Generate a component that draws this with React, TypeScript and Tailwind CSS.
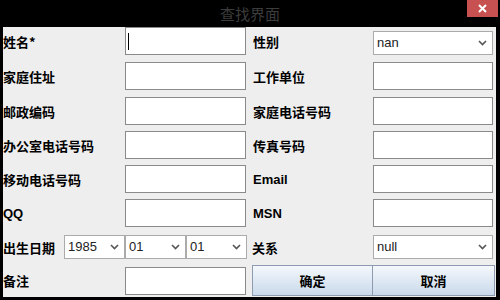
import React from "react";

const cjk = { fontFamily: '"Noto Sans CJK SC", "Noto Sans", sans-serif' };
const latin = { fontFamily: '"Liberation Sans", Arial, sans-serif' };

function Chevron() {
  return (
    <svg width="9" height="6" viewBox="0 0 9 6" className="shrink-0">
      <polyline points="1,1 4.5,4.5 8,1" fill="none" stroke="#555" strokeWidth="1.6" />
    </svg>
  );
}

function Field({ caret = false, w = "w-[121px]" }: { caret?: boolean; w?: string }) {
  return (
    <div className={`${w} h-[28px] shrink-0 border border-[#8a8a8a] bg-white flex items-center`}>
      {caret && <div className="ml-[2px] w-px h-[17px] bg-black" />}
    </div>
  );
}

function Combo({ value, w = "w-[120px]", h = "h-[24px]" }: { value: string; w?: string; h?: string }) {
  return (
    <div
      className={`${w} ${h} shrink-0 border border-[#ababab] bg-white flex items-center justify-between pl-[3px] pr-[5px] text-[13px] text-[#222]`}
      style={latin}
    >
      <span>{value}</span>
      <Chevron />
    </div>
  );
}

function Label({ text, w, bold = true, font = cjk }: { text: string; w: string; bold?: boolean; font?: React.CSSProperties }) {
  return (
    <div className={`${w} shrink-0 text-[13px] leading-none text-black ${bold ? "font-bold" : ""}`} style={font}>
      {text}
    </div>
  );
}

function Row({ left, right, mt }: { left: string; right: string; mt: string }) {
  const isLatin = /^[A-Za-z]+$/.test(right);
  return (
    <div className={`flex items-center h-[28px] ${mt}`}>
      <Label text={left} w="w-[122px]" font={/^[A-Z]+$/.test(left) ? latin : cjk} />
      <Field />
      <div className="w-[7px] shrink-0" />
      <Label text={right} w="w-[120px]" font={isLatin ? latin : cjk} />
      <Field w="w-[120px]" />
    </div>
  );
}

export default function App() {
  return (
    <div className="w-[500px] h-[300px] bg-black flex flex-col overflow-hidden">
      <div className="h-[27px] shrink-0 relative flex items-start justify-center">
        <span className="mt-[3px] text-[15px] text-[#3c3c3c]" style={cjk}>
          查找界面
        </span>
        <div className="absolute right-[2px] top-0 w-[31px] h-[17px] bg-[#c75050] flex items-center justify-center">
          <svg width="9" height="9" viewBox="0 0 9 9">
            <path d="M1 1 L8 8 M8 1 L1 8" stroke="#fff" strokeWidth="2" />
          </svg>
        </div>
      </div>
      <div className="ml-[3px] mr-[4px] h-[270px] bg-[#eeeeee] flex flex-col">
        <div className="flex items-center h-[28px]">
          <Label text="姓名*" w="w-[122px]" />
          <Field caret />
          <div className="w-[7px] shrink-0" />
          <Label text="性别" w="w-[120px]" />
          <div className="self-end">
            <Combo value="nan" />
          </div>
        </div>
        <Row left="家庭住址" right="工作单位" mt="mt-[7px]" />
        <Row left="邮政编码" right="家庭电话号码" mt="mt-[7px]" />
        <Row left="办公室电话号码" right="传真号码" mt="mt-[6px]" />
        <Row left="移动电话号码" right="Email" mt="mt-[6px]" />
        <Row left="QQ" right="MSN" mt="mt-[6px]" />
        <div className="flex items-center h-[24px] mt-[8px]">
          <Label text="出生日期" w="w-[61px]" />
          <Combo value="1985" w="w-[61px]" />
          <Combo value="01" w="w-[61px]" />
          <Combo value="01" w="w-[61px]" />
          <div className="w-[5px] shrink-0" />
          <Label text="关系" w="w-[121px]" />
          <Combo value="null" />
        </div>
        <div className="flex items-center h-[31px] mt-[6px]">
          <Label text="备注" w="w-[122px]" />
          <div className="h-[28px] flex">
            <Field />
          </div>
          <div className="w-[6px] shrink-0" />
          <div className="flex h-[31px]">
            <button
              className="w-[121px] h-full border border-[#8c9bb0] bg-gradient-to-b from-[#f4f8fc] to-[#c9d9eb] text-[13px] font-bold text-black"
              style={cjk}
            >
              确定
            </button>
            <button
              className="w-[122px] h-full border border-l-0 border-[#8c9bb0] bg-gradient-to-b from-[#f4f8fc] to-[#c9d9eb] text-[13px] font-bold text-black"
              style={cjk}
            >
              取消
            </button>
          </div>
        </div>
      </div>
    </div>
  );
}
